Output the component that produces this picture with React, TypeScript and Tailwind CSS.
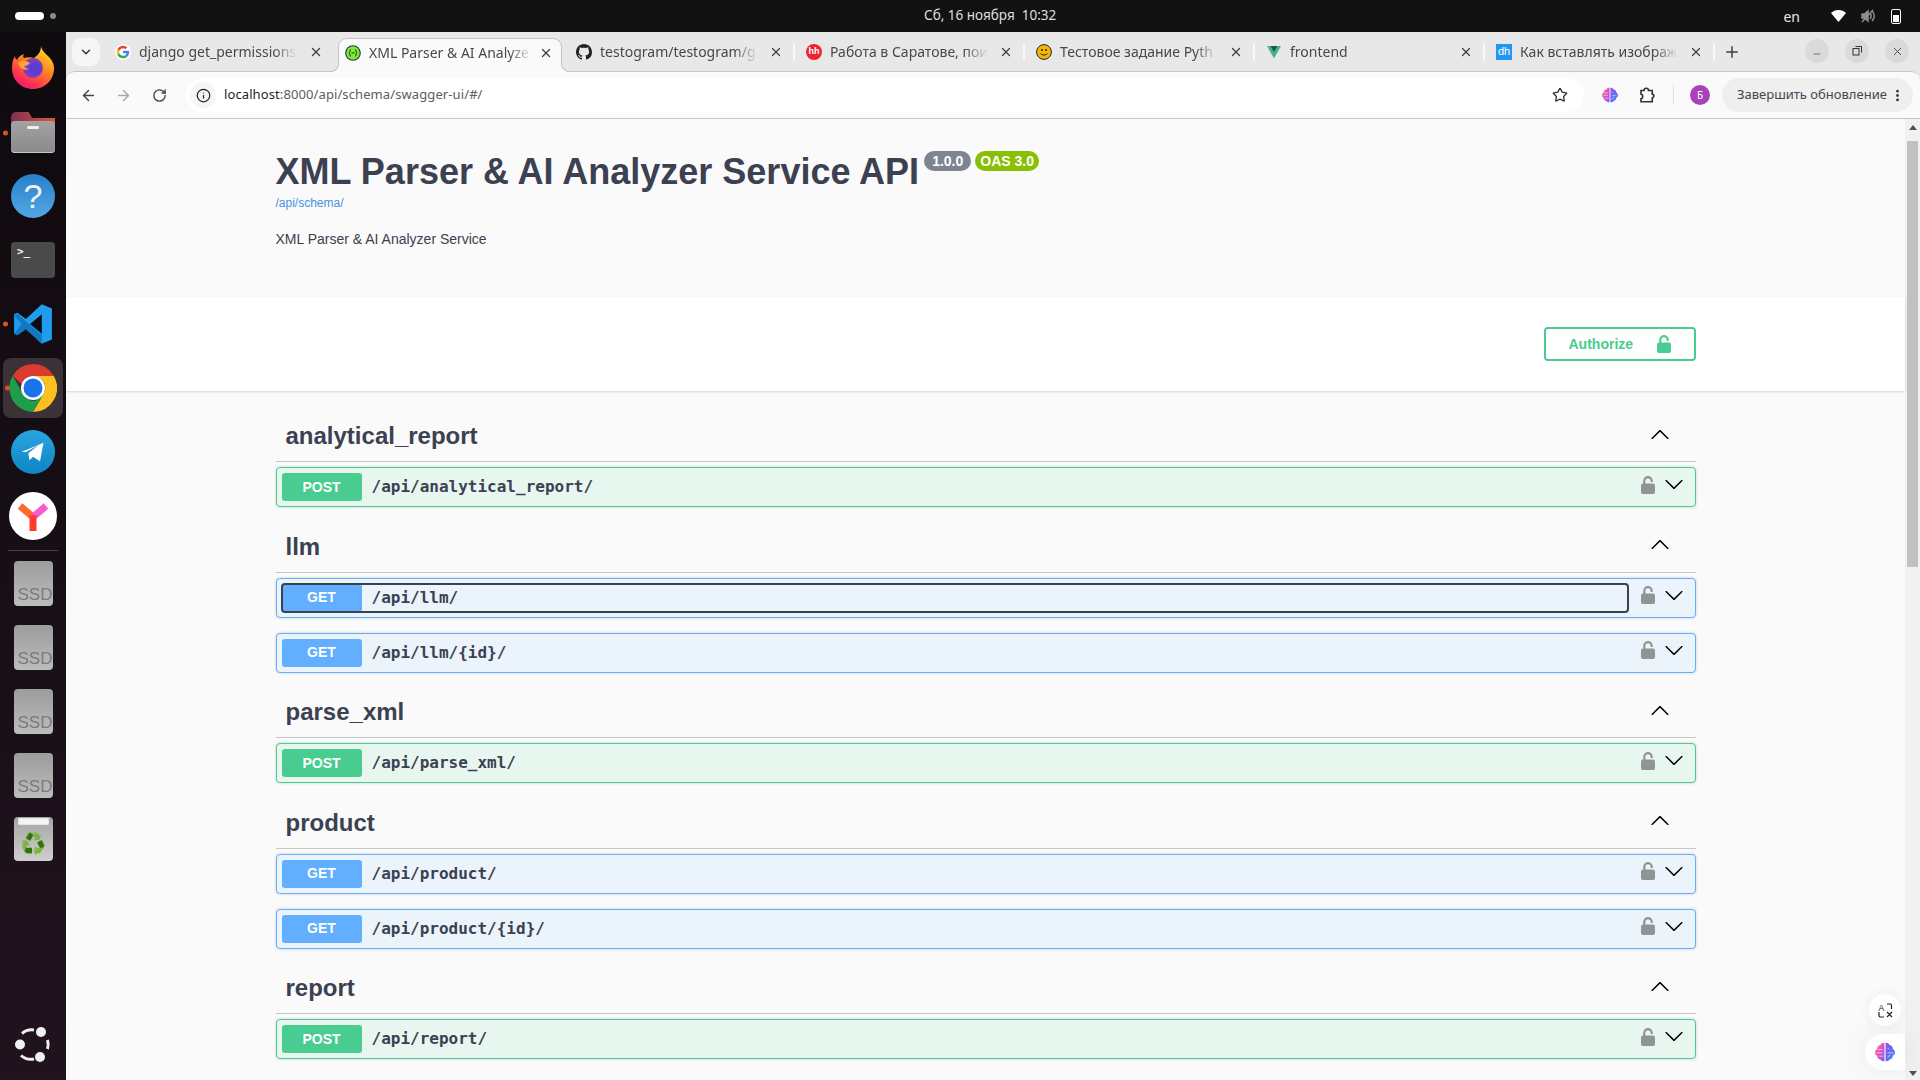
import React from "react";
import { ArrowLeft, ArrowRight, ChevronDown, Info, MoreVertical, Plus, RotateCw, Star, X, Minus } from "lucide-react";

const sans = "font-['Liberation_Sans',Arial,sans-serif]";
const ui = "font-['Noto_Sans','Noto_Sans_CJK_SC',sans-serif]";

function Brain({ size = 16, id }: { size?: number; id: string }) {
  return (
    <svg width={size} height={size} viewBox="0 0 24 24">
      <defs>
        <linearGradient id={`${id}L`} x1="0" y1="0" x2="1" y2="1">
          <stop offset="0" stopColor="#ff8a3c" />
          <stop offset="0.5" stopColor="#e84fc4" />
          <stop offset="1" stopColor="#7a5cf0" />
        </linearGradient>
        <linearGradient id={`${id}R`} x1="0" y1="0" x2="1" y2="1">
          <stop offset="0" stopColor="#9a4df0" />
          <stop offset="1" stopColor="#2f8cff" />
        </linearGradient>
      </defs>
      <path d="M11.300 1C8.800 1 7 2 6.500 3.600 3.800 4 2.500 6 2.700 8 .8 9.200 0 10.800 0 12.500c0 1.800.9 3.300 2.700 4.100-.1 2.400 1.300 4 3.700 4.300.7 1.400 2.700 2.100 4.900 2.100z" fill={`url(#${id}L)`} />
      <path d="M12.700 1c2.500 0 4.300 1 4.800 2.600 2.700.4 4 2.400 3.800 4.400 1.900 1.200 2.700 2.800 2.700 4.500 0 1.800-.9 3.300-2.700 4.100.1 2.400-1.300 4-3.700 4.300-.7 1.400-2.700 2.100-4.900 2.100z" fill={`url(#${id}R)`} />
      <path d="M3 9h6M2 13h7M5 17h5M15 7l2 2M15 13h7M15 18l3-2" stroke="#fff" strokeWidth="1" opacity="0.75" fill="none" />
    </svg>
  );
}

function GoogleIcon() {
  return (
    <svg width="16" height="16" viewBox="0 0 48 48">
      <circle cx="24" cy="24" r="24" fill="#fff" />
      <path fill="#EA4335" d="M24 13c3 0 5.400 1 7.300 2.800l5.400-5.400C33.300 7.200 29 5 24 5 16.600 5 10.200 9.300 7.100 15.500l6.300 4.900C14.900 16 19 13 24 13z" />
      <path fill="#4285F4" d="M42.600 24.400c0-1.300-.1-2.600-.3-3.800H24v7.200h10.500c-.5 2.400-1.800 4.400-3.900 5.800l6.100 4.700c3.600-3.300 5.900-8.200 5.900-13.900z" />
      <path fill="#FBBC05" d="M13.400 27.600c-.4-1.100-.6-2.300-.6-3.600s.2-2.500.6-3.600l-6.300-4.900C5.800 18 5 20.900 5 24s.8 6 2.100 8.500z" />
      <path fill="#34A853" d="M24 43c5 0 9.400-1.700 12.700-4.600l-6.100-4.700c-1.700 1.100-3.900 1.800-6.600 1.800-5 0-9.100-3-10.600-7.400l-6.300 4.900C10.200 38.700 16.600 43 24 43z" />
    </svg>
  );
}

function SwaggerIcon() {
  return (
    <svg width="16" height="16" viewBox="0 0 16 16">
      <circle cx="8" cy="8" r="7.800" fill="#173647" />
      <circle cx="8" cy="8" r="6.700" fill="#85ea2d" />
      <path d="M6 4.500C4.600 4.500 5.300 7.500 4 8c1.300.5.600 3.500 2 3.500M10 4.500c1.400 0 .7 3 2 3.500-1.300.5-.6 3.500-2 3.500M6.500 8h3" stroke="#173647" strokeWidth="1" fill="none" />
    </svg>
  );
}

function GithubIcon() {
  return (
    <svg width="16" height="16" viewBox="0 0 16 16" fill="#222">
      <path d="M8 0C3.580 0 0 3.580 0 8c0 3.540 2.290 6.530 5.470 7.590.4.070.55-.17.55-.38 0-.19-.01-.82-.01-1.490-2.010.37-2.530-.49-2.690-.94-.09-.23-.48-.94-.82-1.130-.28-.15-.68-.52-.01-.53.63-.01 1.080.58 1.230.82.72 1.210 1.870.87 2.330.66.070-.52.280-.87.510-1.070-1.780-.2-3.640-.89-3.640-3.950 0-.87.310-1.590.820-2.150-.080-.2-.360-1.020.080-2.120 0 0 .670-.210 2.200.820.640-.180 1.320-.270 2-.270s1.360.090 2 .270c1.530-1.040 2.200-.820 2.200-.820.440 1.100.160 1.920.080 2.120.510.560.820 1.270.820 2.150 0 3.070-1.870 3.750-3.650 3.950.290.250.540.730.540 1.480 0 1.070-.010 1.930-.010 2.200 0 .210.150.460.550.380A8.010 8.010 0 0016 8c0-4.420-3.580-8-8-8z" />
    </svg>
  );
}

function HhIcon() {
  return (
    <div className={`flex h-4 w-4 items-center justify-center rounded-full bg-[#ef2330] text-[9px] font-bold leading-none text-white ${sans}`}>hh</div>
  );
}

function SmileIcon() {
  return (
    <svg width="16" height="16" viewBox="0 0 16 16">
      <circle cx="8" cy="8" r="7.400" fill="#f5b800" stroke="#222" strokeWidth="1" />
      <circle cx="6" cy="6" r="1" fill="#222" />
      <circle cx="10" cy="6" r="1" fill="#222" />
      <path d="M4.500 9.500c1.500 2 5.500 2 7 0" stroke="#222" strokeWidth="1" fill="none" />
    </svg>
  );
}

function VueIcon() {
  return (
    <svg width="16" height="16" viewBox="0 0 16 16">
      <path d="M1 2h14L8 14.500z" fill="#41b883" />
      <path d="M4.500 2h7L8 8z" fill="#34495e" />
    </svg>
  );
}

function DhIcon() {
  return (
    <div className={`flex h-4 w-4 items-center justify-center bg-[#2496ed] text-[11px] leading-none text-white ${sans}`}>dh</div>
  );
}

const tabs = [
  { title: "django get_permissions", icon: <GoogleIcon /> },
  { title: "XML Parser & AI Analyze", icon: <SwaggerIcon />, active: true },
  { title: "testogram/testogram/g", icon: <GithubIcon />, divider: true },
  { title: "Работа в Саратове, пои", icon: <HhIcon />, divider: true },
  { title: "Тестовое задание Pyth", icon: <SmileIcon />, divider: true },
  { title: "frontend", icon: <VueIcon />, divider: true },
  { title: "Как вставлять изображ", icon: <DhIcon />, divider: true },
];

function Tab({ title, icon, active, divider }: { title: string; icon: React.ReactNode; active?: boolean; divider?: boolean }) {
  return (
    <div
      className={`relative flex shrink-0 items-center pb-[6px] ${
        active
          ? "z-10 mx-[3px] -mb-px h-[34px] w-[224px] rounded-t-[9px] border border-b-0 border-[#c4c4c4] bg-[#fafafa] pl-[6px]"
          : divider
            ? "h-[33px] w-[230px] pl-[11px]"
            : "h-[33px] w-[230px] pl-[10px]"
      }`}
    >
      {active && (
        <>
          <span className="absolute -left-[9px] bottom-0 h-[9px] w-[9px] bg-[radial-gradient(circle_at_0_0,#e8e8e8_8px,#c4c4c4_8.5px,#c4c4c4_9px,#fafafa_9.5px)]" />
          <span className="absolute -right-[9px] bottom-0 h-[9px] w-[9px] bg-[radial-gradient(circle_at_100%_0,#e8e8e8_8px,#c4c4c4_8.5px,#c4c4c4_9px,#fafafa_9.5px)]" />
        </>
      )}
      <span className="flex w-4 shrink-0 justify-center">{icon}</span>
      <span className={`ml-2 overflow-hidden whitespace-nowrap text-[14px] text-[#45484c] [mask-image:linear-gradient(to_right,black_85%,transparent)] ${active ? "w-[164px]" : "w-[158px]"}`}>
        {title}
      </span>
      <X size={14} strokeWidth={2.2} className={`ml-auto shrink-0 text-[#3c3f42] ${active ? "mr-[6px]" : "mr-[10px]"}`} />
      <div className={`h-[18px] w-[2px] shrink-0 ${divider ? "bg-[#f8f8f8]" : ""}`} />
    </div>
  );
}

function ChromeLogo() {
  return (
    <svg width="48" height="48" viewBox="0 0 48 48">
      <path d="M24 0a24 24 0 0 1 20.800 12H24a12 12 0 0 0-11.400 8.300L3.800 11.700A24 24 0 0 1 24 0z" fill="#db3a2e" />
      <path d="M44.800 12A24 24 0 0 1 24 48l10.400-18A12 12 0 0 0 33 15.600L24 12z" fill="#fcc01e" />
      <path d="M24 48A24 24 0 0 1 3.800 11.700L14 30a12 12 0 0 0 13 6.500L34.400 30 24 48z" fill="#1e9e4a" />
      <circle cx="24" cy="24" r="12" fill="#fff" />
      <circle cx="24" cy="24" r="9.500" fill="#1a73e8" />
    </svg>
  );
}

function FirefoxLogo() {
  return (
    <svg width="42" height="43" viewBox="0 0 42 43">
      <defs>
        <linearGradient id="ffA" x1="0.800" y1="0" x2="0.200" y2="1">
          <stop offset="0" stopColor="#ffe226" />
          <stop offset="0.400" stopColor="#ff8a1e" />
          <stop offset="0.800" stopColor="#ff2d55" />
          <stop offset="1" stopColor="#e31587" />
        </linearGradient>
      </defs>
      <path d="M29 0c1 5 4 7 7 10 3 3 6 7 6 12 0 12-9 21-21 21S0 34 0 22c0-5 1-9 3-12 0 2 1 3 2 4 1-3 4-5 7-6-1 2-1 3 0 4 3-1 7-1 10 0C26 9 29 6 29 0z" fill="url(#ffA)" />
      <circle cx="21" cy="22" r="10" fill="#7a3fc0" />
      <circle cx="23" cy="23" r="6.500" fill="#5b3bd0" />
      <path d="M6 17c4-3 9-2 12 0-2 2-3 3-6 3 1 2 3 3 5 3-5 2-9-1-11-6z" fill="#ffa436" />
    </svg>
  );
}

function Folder() {
  return (
    <div className="relative h-[41px] w-[44px]">
      <div className="h-[24px] w-full rounded-t-[5px] bg-gradient-to-r from-[#80304f] to-[#d85a2b] [clip-path:polygon(0_0,40%_0,48%_25%,100%_25%,100%_100%,0_100%)]" />
      <div className="absolute bottom-0 left-0 flex h-[32px] w-full justify-center rounded-[4px] bg-gradient-to-b from-[#a2a2a2] to-[#8a8a8a] pt-[5px] shadow-[inset_0_-1px_0_#c7c7c7]">
        <div className="h-[3px] w-[12px] rounded-sm bg-[#eeeeee]" />
      </div>
    </div>
  );
}

function Ssd() {
  return (
    <div className={`flex h-[45px] w-[39px] items-end justify-end overflow-hidden rounded-[4px] bg-gradient-to-b from-[#9c9c9c] to-[#bdbdbd] pb-[2px] text-[17px] leading-[19px] text-[#7b7b7b] ${sans}`}>
      SSD
    </div>
  );
}

function Trash() {
  return (
    <div className="relative flex h-[44px] w-[39px] items-end justify-center rounded-[4px] bg-gradient-to-b from-[#a5a5a5] to-[#cfcfcf] pb-[6px]">
      <div className="absolute left-[4px] top-[1px] h-[7px] w-[31px] rounded-[1px] border border-[#e5e5e5] bg-[#f4f4f4]" />
      <span className="text-[21px] leading-[24px] text-[#2a7d1e]">♻</span>
    </div>
  );
}

function UbuntuLogo() {
  return (
    <svg width="38" height="37" viewBox="0 0 38 37" fill="none">
      <path d="M8 7.500a15 15 0 0 1 12-3.500M7 29.500a15 15 0 0 0 13 3.500M33.500 14a15 15 0 0 1 0 9" stroke="#f0f0f0" strokeWidth="3" />
      <circle cx="6" cy="18.500" r="5" fill="#f0f0f0" />
      <circle cx="27" cy="6" r="5" fill="#f0f0f0" />
      <circle cx="26" cy="31" r="5" fill="#f0f0f0" />
    </svg>
  );
}

function Dot() {
  return <div className="absolute left-[3px] top-1/2 h-[5px] w-[5px] -translate-y-1/2 rounded-full bg-[#d9531e]" />;
}

function Sidebar() {
  return (
    <div className="relative flex h-[1048px] w-[66px] shrink-0 flex-col items-center bg-gradient-to-b from-[#0e0a0e] to-[#21131e] pt-[14px]">
      <FirefoxLogo />
      <div className="relative mt-[23px] flex w-full justify-center"><Dot /><Folder /></div>
      <div className={`mt-[21px] flex h-[44px] w-[44px] items-center justify-center rounded-full bg-gradient-to-b from-[#2680c8] to-[#52a8e5] text-[34px] leading-none text-[#f2f2f2] ${sans}`}>?</div>
      <div className="mt-[24px] h-[36px] w-[44px] rounded-[4px] bg-[#4a4a4a] pl-[6px] pt-[4px] font-['DejaVu_Sans_Mono',monospace] text-[11px] font-bold leading-[12px] text-[#f0f0f0]">&gt;_</div>
      <div className="relative mt-[25px] flex w-full justify-center">
        <Dot />
        <svg width="42" height="42" viewBox="0 0 100 100">
          <path d="M71 3 33 38 13 23 5 27v46l8 4 20-15 38 35 24-10V13z" fill="#1f9cf0" />
          <path d="M71 27 43 50l28 23z" fill="#0e0a12" />
          <path d="M5 30l8-4 58 50-0 21-38-35-20 15-8-4 18-23z" fill="#0f72b8" opacity="0.85" />
        </svg>
      </div>
      <div className="relative mt-[13px] flex h-[60px] w-[60px] items-center justify-center rounded-[8px] bg-[#3b3136]">
        <div className="absolute left-[2px] top-1/2 h-[5px] w-[5px] -translate-y-1/2 rounded-full bg-[#d9531e]" />
        <ChromeLogo />
      </div>
      <div className="mt-[12px] flex h-[44px] w-[44px] items-center justify-center rounded-full bg-gradient-to-b from-[#2aa5e0] to-[#0d84c4]">
        <svg width="28" height="28" viewBox="0 0 24 24"><path d="M2 12 21 4l-3 16-6-4-3 3-1-6 9-7-11 6z" fill="#fff" /></svg>
      </div>
      <div className="mt-[18px] flex h-[48px] w-[48px] items-center justify-center rounded-full bg-white">
        <svg width="34" height="34" viewBox="0 0 34 34" fill="none">
          <path d="M4 7l13 11" stroke="#ff6a2a" strokeWidth="7" />
          <path d="M30 7 17 18" stroke="#f45bd0" strokeWidth="7" />
          <path d="M17 16v16" stroke="#ff3b30" strokeWidth="7" />
        </svg>
      </div>
      <div className="mt-[10px] h-px w-[50px] bg-[#4a4046]" />
      <div className="mt-[10px] flex flex-col gap-[19px]">
        <Ssd />
        <Ssd />
        <Ssd />
        <Ssd />
        <Trash />
      </div>
      <div className="mb-[17px] mt-auto"><UbuntuLogo /></div>
    </div>
  );
}

function TopBar() {
  return (
    <div className={`relative flex h-[32px] items-center bg-[#121212] text-white ${ui}`}>
      <div className="ml-[15px] h-[8px] w-[29px] rounded-full bg-white" />
      <div className="ml-[6px] h-[6px] w-[6px] rounded-full bg-[#8a8a8a]" />
      <div className="ml-auto mr-[31px] text-[14px] text-[#e8e8e8]">en</div>
      <svg width="15" height="12" viewBox="0 0 15 12" className="mr-[15px]"><path d="M0 3C4-1 11-1 15 3L7.500 12z" fill="#fff" /></svg>
      <svg width="14" height="14" viewBox="0 0 14 14" className="mr-[16px]" fill="none" stroke="#8f8f8f" strokeWidth="1.500">
        <path d="M1 5h2.500L7 2v10L3.500 9H1z" fill="#8f8f8f" /><path d="M9 4c1.500 1.500 1.500 4.500 0 6M11 2c3 3 3 7 0 10M1 13 12 1" />
      </svg>
      <div className="mr-[19px] flex h-[15px] w-[10px] items-end rounded-[2px] border border-white p-[1px]"><div className="h-[7px] w-full bg-white" /></div>
      <div className="absolute left-[924px] top-[5px] whitespace-nowrap text-[13.5px] text-[#dfdfdf]">Сб, 16 ноября&nbsp; 10:32</div>
    </div>
  );
}

function TabStrip() {
  return (
    <div className={`flex h-[39px] items-end bg-[#e8e8e8] ${ui}`}>
      <div className="mb-[5px] ml-[6px] flex h-[28px] w-[28px] items-center justify-center rounded-[9px] bg-[#f6f6f6]">
        <ChevronDown size={14} strokeWidth={2.5} className="text-[#333]" />
      </div>
      <div className="ml-[5px] flex items-end">
        {tabs.map((t) => (
          <Tab key={t.title} title={t.title} icon={t.icon} active={t.active} divider={t.divider} />
        ))}
      </div>
      <Plus size={18} strokeWidth={2} className="mb-[10px] ml-[8px] text-[#3c3f42]" />
      <div className="mb-[8px] ml-auto mr-[11px] flex gap-[16px]">
        <div className="flex h-6 w-6 items-center justify-center rounded-full bg-[#dadada]"><Minus size={10} strokeWidth={1.500} className="mt-[6px] text-[#333]" /></div>
        <div className="flex h-6 w-6 items-center justify-center rounded-full bg-[#dadada]">
          <svg width="10" height="10" viewBox="0 0 10 10" fill="none" stroke="#333"><path d="M3.500.5h6v6" /><rect x="1" y="2.500" width="6" height="6.500" /></svg>
        </div>
        <div className="flex h-6 w-6 items-center justify-center rounded-full bg-[#dadada]"><X size={13} strokeWidth={1.500} className="text-[#333]" /></div>
      </div>
    </div>
  );
}

function Toolbar() {
  return (
    <div className={`flex h-[48px] items-center rounded-t-[9px] border-b border-t border-[#c6c6c6] bg-[#fafafa] ${ui}`}>
      <ArrowLeft size={17} strokeWidth={2} className="ml-[14px] text-[#444]" />
      <ArrowRight size={17} strokeWidth={2} className="ml-[18px] text-[#a8a8a8]" />
      <RotateCw size={15} strokeWidth={2.2} className="ml-[20px] text-[#444]" />
      <div className="ml-[19px] flex h-[34px] w-[1398px] items-center rounded-full bg-white">
        <div className="ml-[4px] flex h-[26px] w-[26px] items-center justify-center rounded-full bg-[#f6f6f6]">
          <Info size={15} strokeWidth={2} className="text-[#222]" />
        </div>
        <div className="ml-[8px] text-[13px] tracking-[0.1px] text-[#5a5d62]"><span className="text-[#1d1f21]">localhost</span>:8000/api/schema/swagger-ui/#/</div>
        <Star size={16} strokeWidth={2} className="ml-auto mr-[16px] text-[#333]" />
      </div>
      <div className="ml-[18px]"><Brain size={16} id="brainTop" /></div>
      <svg width="18" height="18" viewBox="0 0 24 24" className="ml-[20px]" fill="none" stroke="#333" strokeWidth="2.200">
        <path d="M4 6h4c0-4 6-4 6 0h5v5c3 0 3 4 0 5v5H4v-4c3 0 3-6 0-6z" />
      </svg>
      <div className="ml-[17px] h-[20px] w-px bg-[#e0e0e0]" />
      <div className="ml-[16px] flex h-5 w-5 items-center justify-center rounded-full bg-[#a742b8] text-[10px] text-white">Б</div>
      <div className="ml-[12px] flex h-[34px] w-[191px] items-center rounded-full bg-[#efefef] pl-[15px] text-[13px] text-[#45484c]">
        Завершить обновление
        <MoreVertical size={15} strokeWidth={2.500} className="ml-auto mr-[8px] text-[#333]" />
      </div>
    </div>
  );
}

function LockIcon({ color }: { color: string }) {
  return (
    <svg width="14" height="18" viewBox="0 0 14 18" fill="none" className={color}>
      <path d="M3.300 8V4.800a3.700 3.700 0 0 1 7.400 0V6" stroke="currentColor" strokeWidth="2.200" />
      <rect x="0" y="7.500" width="14" height="10.500" rx="2" fill="currentColor" />
    </svg>
  );
}

function SwaggerArrow({ up }: { up?: boolean }) {
  return (
    <svg width="20" height="20" viewBox="0 0 20 20" className={up ? "rotate-180" : ""}>
      <path d="M17.418 6.109c.272-.268.709-.268.979 0s.271.701 0 .969l-7.908 7.830c-.27.268-.707.268-.979 0l-7.908-7.830c-.27-.268-.27-.701 0-.969.271-.268.709-.268.979 0L10 13.250l7.418-7.141z" fill="#000" />
    </svg>
  );
}

function Opblock({ method, path, focused }: { method: "GET" | "POST"; path: string; focused?: boolean }) {
  const get = method === "GET";
  return (
    <div className={`mb-[15px] flex h-[40px] items-center rounded border p-[5px] shadow-[0_0_3px_rgba(0,0,0,0.19)] ${get ? "border-[#61affe] bg-[#ebf3fb]" : "border-[#49cc90] bg-[#e8f6f0]"}`}>
      <div className={`flex h-[28px] w-[1346px] shrink-0 items-center ${focused ? "rounded-[3px] outline-2 -outline-offset-1 outline-[#3b4151]" : ""}`}>
        <div className={`flex h-[28px] w-[80px] items-center justify-center rounded-[3px] text-[14px] font-bold text-white ${sans} ${get ? "bg-[#61affe]" : "bg-[#49cc90]"}`}>{method}</div>
        <div className="ml-[10px] font-['DejaVu_Sans_Mono',monospace] text-[16px] font-semibold text-[#3b4151]">{path}</div>
      </div>
      <div className="mb-[5px] ml-[13px]"><LockIcon color="text-[#909493]" /></div>
      <div className="mb-[6px] ml-[9px]"><SwaggerArrow /></div>
    </div>
  );
}

const sections: { name: string; ops: { method: "GET" | "POST"; path: string; focused?: boolean }[] }[] = [
  { name: "analytical_report", ops: [{ method: "POST", path: "/api/analytical_report/" }] },
  { name: "llm", ops: [{ method: "GET", path: "/api/llm/", focused: true }, { method: "GET", path: "/api/llm/{id}/" }] },
  { name: "parse_xml", ops: [{ method: "POST", path: "/api/parse_xml/" }] },
  { name: "product", ops: [{ method: "GET", path: "/api/product/" }, { method: "GET", path: "/api/product/{id}/" }] },
  { name: "report", ops: [{ method: "POST", path: "/api/report/" }] },
];

function SwaggerPage() {
  return (
    <div className={`min-w-0 flex-1 ${sans} text-[#3b4151]`}>
      <div className="h-[178px] bg-[#fafafa]">
        <div className="mx-auto w-[1420px] pt-[32px]">
          <div className="flex items-start">
            <h2 className="text-[36px] font-bold leading-[41px]">XML Parser &amp; AI Analyzer Service API</h2>
            <span className="ml-[5px] rounded-[10px] bg-[#7d8492] px-[8px] py-[1px] text-[14px] font-bold leading-[18px] text-white">1.0.0</span>
            <span className="ml-[4px] rounded-[10px] bg-[#89bf04] px-[5px] py-[1px] text-[14px] font-bold leading-[18px] text-white">OAS 3.0</span>
          </div>
          <div className="mt-[1px] text-[12px] leading-[20px] text-[#4990e2]">/api/schema/</div>
          <div className="mt-[16px] text-[14px] leading-[20px]">XML Parser &amp; AI Analyzer Service</div>
        </div>
      </div>
      <div className="relative bg-white py-[30px] shadow-[0_1px_2px_rgba(0,0,0,0.15)]">
        <div className="mx-auto flex w-[1420px] justify-end">
          <div className="flex h-[34px] w-[152px] items-center rounded border-2 border-[#49cc90] pl-[23px] text-[14px] font-bold text-[#49cc90]">
            Authorize
            <span className="ml-[24px]"><LockIcon color="text-[#49cc90]" /></span>
          </div>
        </div>
      </div>
      <div className="bg-[#fafafa] pt-[20.5px]">
        <div className="mx-auto w-[1420px]">
          {sections.map((s) => (
            <div key={s.name}>
              <div className="mb-[5px] flex h-[50.5px] items-center border-b border-[#c4c6ca] pl-[10px] pr-[26px]">
                <h3 className="text-[24px] font-bold">{s.name}</h3>
                <div className="mb-[3px] ml-auto"><SwaggerArrow up /></div>
              </div>
              {s.ops.map((o) => (
                <Opblock key={o.path} method={o.method} path={o.path} focused={o.focused} />
              ))}
            </div>
          ))}
        </div>
      </div>
    </div>
  );
}

function Scrollbar() {
  return (
    <div className="flex h-full w-[15px] shrink-0 flex-col items-center bg-[#f1f1f1] pt-[6px]">
      <div className="h-0 w-0 border-x-[4px] border-b-[5px] border-x-transparent border-b-[#505050]" />
      <div className="mt-[11px] h-[426px] w-[11px] bg-[#c1c1c1]" />
      <div className="mb-[4px] mt-auto h-0 w-0 border-x-[4px] border-t-[5px] border-x-transparent border-t-[#505050]" />
    </div>
  );
}

function FloatingButtons() {
  return (
    <div className="absolute bottom-[10px] right-[15px] flex flex-col items-end gap-[8px]">
      <div className="mr-[4px] flex h-8 w-8 items-center justify-center rounded-full bg-white shadow-[0_0_14px_rgba(0,0,0,0.06)]">
        <svg width="15" height="15" viewBox="0 0 15 15" fill="none" stroke="#222" strokeWidth="1.200">
          <text x="0.500" y="7.500" fontSize="8.500" fill="#222" stroke="none" fontFamily="Liberation Sans">A</text>
          <path d="M9 1h3.500a1.500 1.500 0 0 1 1 1.500V6M1 9v3.500A1.500 1.500 0 0 0 2.500 14H6M9 9l5 5M14 9l-5 5" />
        </svg>
      </div>
      <div className="flex h-[36px] w-[40px] items-center justify-center rounded-l-full bg-white shadow-[0_0_30px_rgba(0,0,0,0.08)]">
        <Brain size={20} id="brainFloat" />
      </div>
    </div>
  );
}

export default function App() {
  return (
    <div className="h-[1080px] w-[1920px] overflow-hidden bg-[#1a0f1a]">
      <TopBar />
      <div className="flex">
        <Sidebar />
        <div className="flex h-[1048px] min-w-0 flex-1 flex-col bg-[#e8e8e8]">
          <TabStrip />
          <Toolbar />
          <div className="relative flex min-h-0 flex-1 overflow-hidden bg-[#fafafa]">
            <SwaggerPage />
            <Scrollbar />
            <FloatingButtons />
          </div>
        </div>
      </div>
    </div>
  );
}
